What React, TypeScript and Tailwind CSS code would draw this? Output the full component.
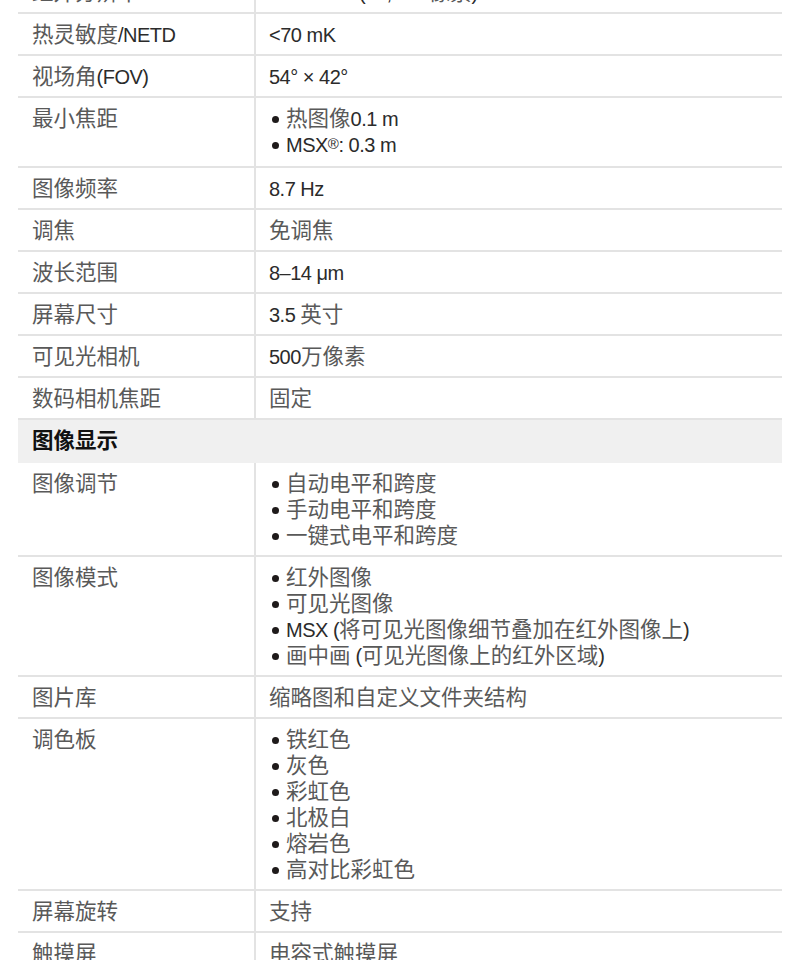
import React from "react";

type Row =
  | { kind: "section"; title: string }
  | { kind: "row"; label: string; value?: string; items?: string[] };

const rows: Row[] = [
  { kind: "row", label: "红外分辨率", value: "320 × 240 (76,800 像素)" },
  { kind: "row", label: "热灵敏度/NETD", value: "<70 mK" },
  { kind: "row", label: "视场角(FOV)", value: "54° × 42°" },
  { kind: "row", label: "最小焦距", items: ["热图像0.1 m", "MSX®: 0.3 m"] },
  { kind: "row", label: "图像频率", value: "8.7 Hz" },
  { kind: "row", label: "调焦", value: "免调焦" },
  { kind: "row", label: "波长范围", value: "8–14 μm" },
  { kind: "row", label: "屏幕尺寸", value: "3.5 英寸" },
  { kind: "row", label: "可见光相机", value: "500万像素" },
  { kind: "row", label: "数码相机焦距", value: "固定" },
  { kind: "section", title: "图像显示" },
  {
    kind: "row",
    label: "图像调节",
    items: ["自动电平和跨度", "手动电平和跨度", "一键式电平和跨度"],
  },
  {
    kind: "row",
    label: "图像模式",
    items: [
      "红外图像",
      "可见光图像",
      "MSX (将可见光图像细节叠加在红外图像上)",
      "画中画 (可见光图像上的红外区域)",
    ],
  },
  { kind: "row", label: "图片库", value: "缩略图和自定义文件夹结构" },
  {
    kind: "row",
    label: "调色板",
    items: ["铁红色", "灰色", "彩虹色", "北极白", "熔岩色", "高对比彩虹色"],
  },
  { kind: "row", label: "屏幕旋转", value: "支持" },
  { kind: "row", label: "触摸屏", value: "电容式触摸屏" },
];

// split into CJK and latin runs so each script gets its own size/colour
const Text = ({ text }: { text: string }) => {
  const parts = text.split(/([\u3000-\u9fff\uff00-\uffef]+)/).filter(Boolean);
  return (
    <>
      {parts.map((p, i) =>
        /[\u3000-\u9fff\uff00-\uffef]/.test(p) ? (
          <span key={i} className="text-[#595959]">
            {p}
          </span>
        ) : (
          <span key={i} className="text-[20px] tracking-[-0.5px] text-[#2b2b2b]">
            {p.split("®").map((s, j) =>
              j === 0 ? (
                s
              ) : (
                <React.Fragment key={j}>
                  <sup className="text-[15px] relative top-[-3px]">®</sup>
                  {s}
                </React.Fragment>
              )
            )}
          </span>
        )
      )}
    </>
  );
};

const font = {
  fontFamily: '"Liberation Sans", "Noto Sans CJK SC", sans-serif',
};

export default function App() {
  return (
    <div className="w-[790px] h-[960px] overflow-hidden bg-white" style={font}>
      <div className="ml-[18px] mr-[8px] mt-[-28px] text-[21.5px]">
        {rows.map((row, i) =>
          row.kind === "section" ? (
            <div
              key={i}
              className="h-[43px] flex items-center px-[14px] bg-[#f0f0f0] font-bold text-[#111]"
            >
              {row.title}
            </div>
          ) : (
            <div key={i} className="flex border-b-2 border-[#e3e3e3]">
              <div className="w-[238px] shrink-0 border-r-2 border-[#e3e3e3] pl-[14px] pt-2 pb-[6px] leading-[26px]">
                <Text text={row.label} />
              </div>
              <div className="flex-1 pl-[13px] pt-2 pb-[6px] leading-[26px]">
                {row.items ? (
                  <div className={row.items.length === 2 ? "pb-[2px]" : ""}>
                    {row.items.map((it, j) => (
                      <div key={j} className="flex items-center">
                        <span className="w-[7px] h-[7px] rounded-full bg-[#1e1a1a] ml-[3px] mr-[7px] shrink-0" />
                        <span>
                          <Text text={it} />
                        </span>
                      </div>
                    ))}
                  </div>
                ) : (
                  <Text text={row.value ?? ""} />
                )}
              </div>
            </div>
          )
        )}
      </div>
    </div>
  );
}
